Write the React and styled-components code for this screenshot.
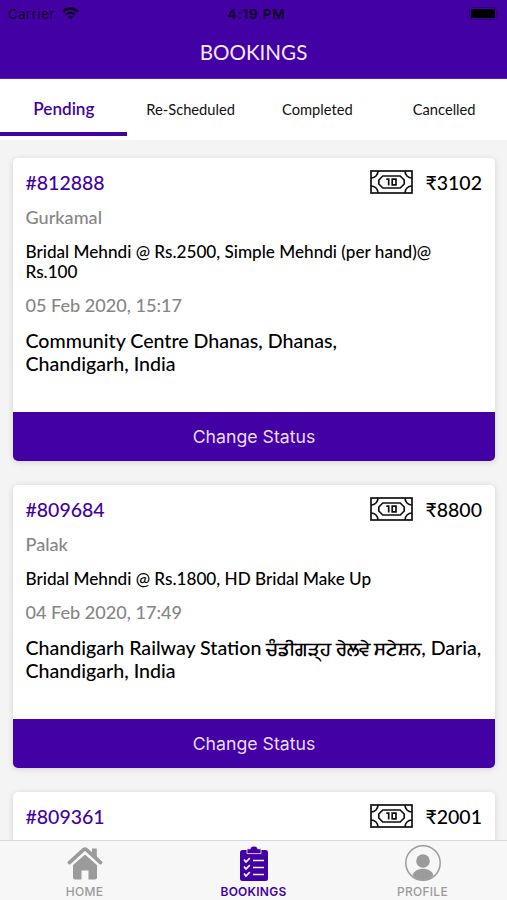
import React from "react";
import styled, { createGlobalStyle } from "styled-components";

const PURPLE = "#4300a5";

const GlobalStyle = createGlobalStyle`
  * {
    box-sizing: border-box;
  }

  body {
    margin: 0;
    font-family: Lato, "Noto Sans", sans-serif;
    background-color: #f4f4f4;
  }
`;

const Screen = styled.div`
  width: 507px;
  height: 900px;
  display: flex;
  flex-direction: column;
  overflow: hidden;
  background-color: #f4f4f4;
`;

const Header = styled.header`
  height: 79px;
  flex: none;
  background-color: ${PURPLE};
  border-bottom: 1px solid #5c1cb8;
`;

const StatusBar = styled.div`
  height: 27px;
  padding: 0 8px;
  display: grid;
  grid-template-columns: 1fr auto 1fr;
  align-items: center;
  font-family: Inter, sans-serif;
  font-size: 13px;
  color: #0d0022;

  .carrier {
    display: flex;
    align-items: center;
    gap: 7px;
    letter-spacing: 0.65px;
  }

  .time {
    padding-left: 6px;
    font-size: 13.5px;
    font-weight: 600;
    letter-spacing: 0.8px;
  }

  .battery {
    justify-self: end;
    display: block;
  }
`;

const Title = styled.h1`
  margin: 0;
  line-height: 50px;
  text-align: center;
  font-size: 20.6px;
  font-weight: 400;
  color: #f3eaff;
`;

const Tabs = styled.div`
  height: 61px;
  flex: none;
  display: grid;
  grid-template-columns: repeat(4, 1fr);
  background-color: white;
`;

const Tab = styled.div`
  height: 57px;
  padding-left: 1px;
  line-height: 60px;
  text-align: center;
  white-space: nowrap;
  font-size: ${props => (props.$active ? "17.1px" : "14.7px")};
  font-weight: ${props => (props.$active ? 600 : 400)};
  color: ${props => (props.$active ? PURPLE : "#111")};
  border-bottom: 4px solid ${props => (props.$active ? PURPLE : "transparent")};
`;

const List = styled.main`
  flex: 1;
  min-height: 0;
  overflow: hidden;
  padding: 18px 12px 0 13px;
  display: flex;
  flex-direction: column;
  gap: 24px;
`;

const Card = styled.section`
  flex: none;
  border-radius: 5px;
  background-color: white;
  box-shadow: 0 1px 6px rgba(0, 0, 0, 0.14);
  overflow: hidden;

  .details {
    padding: 12px 13px 37px 12.5px;
  }

  .top {
    height: 24px;
    display: flex;
    align-items: center;
    font-size: 19.5px;
    font-weight: 500;
  }

  .number {
    flex: 1;
    color: ${PURPLE};
  }

  .price {
    margin-left: 12px;
    color: #000;
  }

  p {
    margin: 0;
    color: #000;
    font-weight: 500;
    white-space: pre;
  }

  .name, .date {
    font-size: 18.1px;
    line-height: 22px;
    font-weight: 500;
    color: #868686;
  }

  .name {
    margin-top: 12px;
  }

  .services {
    margin-top: 14px;
    font-size: 17.15px;
    line-height: 20px;
  }

  .date {
    margin-top: 12px;
  }

  .address {
    margin-top: 13px;
    font-size: 19.6px;
    line-height: 23px;
  }
`;

const Gurmukhi = styled.span`
  font-size: 18.3px;
  font-weight: 700;
  line-height: 1;
`;

const StatusButton = styled.button`
  display: block;
  width: 100%;
  height: 49px;
  padding: 0;
  border: 0;
  background-color: ${PURPLE};
  color: #eadcff;
  font-family: Inter, sans-serif;
  font-size: 17.7px;
`;

const TabBar = styled.nav`
  height: 60px;
  flex: none;
  display: grid;
  grid-template-columns: repeat(3, 1fr);
  background-color: #f7f7f7;
  border-top: 1px solid #d8d8d8;
`;

const NavItem = styled.div`
  display: flex;
  flex-direction: column;
  align-items: center;
  padding-top: 4px;
  color: ${props => (props.$active ? PURPLE : "#9b9b9b")};
  font-family: Inter, sans-serif;
  font-size: 12px;
  font-weight: ${props => (props.$active ? 600 : 500)};
  line-height: 15px;
  letter-spacing: 0.25px;

  svg {
    display: block;
    margin-bottom: 3px;
  }
`;

const WifiIcon = () => (
  <svg width="17" height="13" viewBox="0 0 17 13" fill="none" stroke="currentColor" strokeWidth="2.5">
    <path d="M1 4.6C5.2 0.6 11.8 0.6 16 4.6" />
    <path d="M3.8 7.7C6.5 5.2 10.5 5.2 13.2 7.7" />
    <path d="M8.5 12.3L5.9 9.6C7.4 8.3 9.6 8.3 11.1 9.6Z" fill="currentColor" stroke="none" />
  </svg>
);

const BatteryIcon = () => (
  <svg className="battery" width="30" height="13" viewBox="0 0 30 13">
    <rect x="0.5" y="0.5" width="27" height="12" rx="3" fill="none" stroke="#2d0870" />
    <rect x="2" y="2" width="24" height="9" rx="1.5" fill="#000" />
    <path d="M28.5 4.5C30 5 30 8 28.5 8.5Z" fill="#2d0870" />
  </svg>
);

const CashIcon = () => (
  <svg width="43" height="24" viewBox="0 0 43 24" fill="none" stroke="#111" strokeWidth="1.7">
    <rect x="1" y="1" width="41" height="22" />
    <path d="M8 1C8 5 5 8 1 8M35 1C35 5 38 8 42 8M8 23C8 19 5 16 1 16M35 23C35 19 38 16 42 16" />
    <path d="M12.8 6H30.2L34.2 10V14L30.2 18H12.8L8.8 14V10Z" />
    <path d="M16.3 9.2H18.7V15.6" />
    <path d="M22.2 9.2H26V14.8H22.2Z" />
  </svg>
);

const HomeIcon = () => (
  <svg width="36" height="36" viewBox="0 0 36 36" fill="currentColor">
    <path d="M25 3.5H29.8V14L25 9.5Z" />
    <path d="M18 9.5L30 20V32.5Q30 34.5 28 34.5H21.5V25.5H14.5V34.5H8Q6 34.5 6 32.5V20Z" />
    <path d="M2.2 20.6L18 6.6L33.8 20.6" fill="none" stroke="#f7f7f7" strokeWidth="3.6" />
    <path d="M2.4 17.6L16.6 4.6Q18 3.4 19.4 4.6L33.6 17.6" fill="none" stroke="currentColor" strokeWidth="3.6" strokeLinecap="round" strokeLinejoin="round" />
  </svg>
);

const BookingsIcon = () => (
  <svg width="36" height="36" viewBox="0 0 36 36">
    <rect x="4" y="5" width="28" height="31" rx="2.5" fill="currentColor" />
    <path d="M11 3.8H14.2C15 0.2 21 0.2 21.8 3.8H25V8.6H11Z" fill="currentColor" stroke="#f7f7f7" strokeWidth="0.8" />
    <path d="M8 14.5L10 17L13.8 13.2M8 21.5L10 24L13.8 20.2M8 28.5L10 31L13.8 27.2" fill="none" stroke="#f7f7f7" strokeWidth="1.7" />
    <path d="M17 15.5H28M17 22.5H28M17 29.5H28" stroke="#f7f7f7" strokeWidth="1.7" />
  </svg>
);

const ProfileIcon = () => (
  <svg width="36" height="36" viewBox="0 0 36 36">
    <circle cx="18" cy="18" r="17.2" fill="none" stroke="currentColor" strokeWidth="1.5" />
    <circle cx="18" cy="16" r="6.8" fill="currentColor" />
    <path d="M7.5 30.5C9.5 21.5 26.5 21.5 28.5 30.5C22.5 36.5 13.5 36.5 7.5 30.5Z" fill="currentColor" />
  </svg>
);

const bookings = [
  {
    number: "#812888",
    price: "₹3102",
    name: "Gurkamal",
    services: "Bridal Mehndi @ Rs.2500, Simple Mehndi (per hand)@\nRs.100",
    date: "05 Feb 2020, 15:17",
    address: "Community Centre Dhanas, Dhanas,\nChandigarh, India"
  },
  {
    number: "#809684",
    price: "₹8800",
    name: "Palak",
    services: "Bridal Mehndi @ Rs.1800, HD Bridal Make Up",
    date: "04 Feb 2020, 17:49",
    address: (
      <>
        Chandigarh Railway Station <Gurmukhi>ਚੰਡੀਗੜ੍ਹ ਰੇਲਵੇ ਸਟੇਸ਼ਨ</Gurmukhi>
        {", Daria,\nChandigarh, India"}
      </>
    )
  },
  {
    number: "#809361",
    price: "₹2001"
  }
];

const Booking = ({ booking }) => (
  <Card>
    <div className="details">
      <div className="top">
        <span className="number">{booking.number}</span>
        <CashIcon />
        <span className="price">{booking.price}</span>
      </div>
      {booking.name && (
        <>
          <p className="name">{booking.name}</p>
          <p className="services">{booking.services}</p>
          <p className="date">{booking.date}</p>
          <p className="address">{booking.address}</p>
        </>
      )}
    </div>
    {booking.name && <StatusButton>Change Status</StatusButton>}
  </Card>
);

const App = () => (
  <Screen>
    <GlobalStyle />
    <Header>
      <StatusBar>
        <span className="carrier">Carrier <WifiIcon /></span>
        <span className="time">4:19 PM</span>
        <BatteryIcon />
      </StatusBar>
      <Title>BOOKINGS</Title>
    </Header>
    <Tabs>
      <Tab $active>Pending</Tab>
      <Tab>Re-Scheduled</Tab>
      <Tab>Completed</Tab>
      <Tab>Cancelled</Tab>
    </Tabs>
    <List>
      {bookings.map(booking => (
        <Booking key={booking.number} booking={booking} />
      ))}
    </List>
    <TabBar>
      <NavItem><HomeIcon />HOME</NavItem>
      <NavItem $active><BookingsIcon />BOOKINGS</NavItem>
      <NavItem><ProfileIcon />PROFILE</NavItem>
    </TabBar>
  </Screen>
);

export default App;
